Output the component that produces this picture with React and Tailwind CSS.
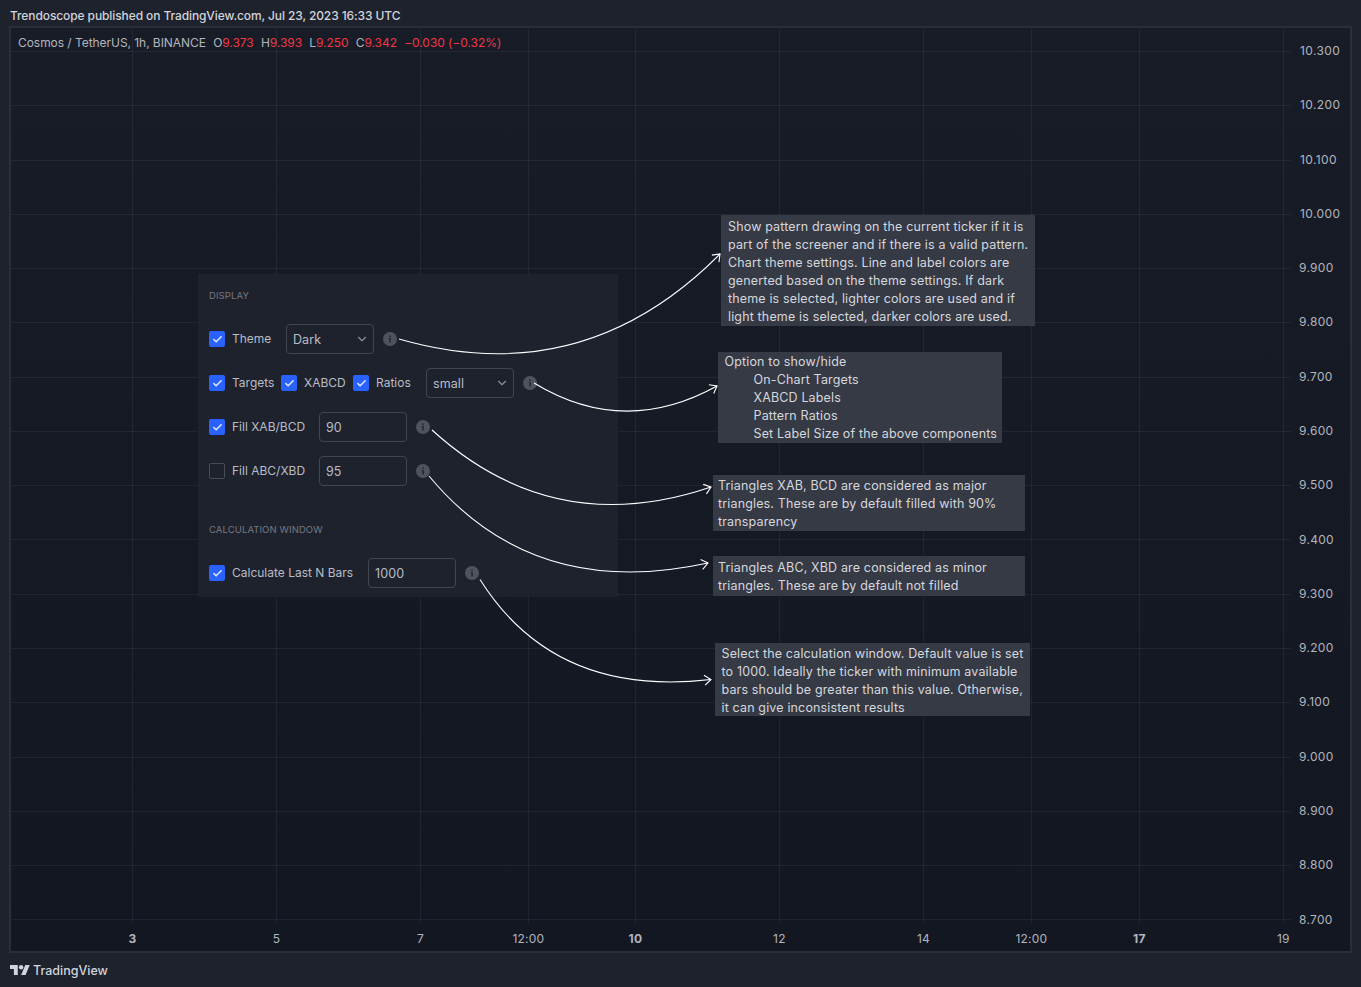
import { Check, ChevronDown } from "lucide-react";

const prices = Array.from({ length: 17 }, (_, i) => (10.3 - i * 0.1).toFixed(3));

const times = [
  { x: 132, label: "3", bold: true },
  { x: 276, label: "5" },
  { x: 420, label: "7" },
  { x: 528, label: "12:00" },
  { x: 635, label: "10", bold: true },
  { x: 779, label: "12" },
  { x: 923, label: "14" },
  { x: 1031, label: "12:00" },
  { x: 1139, label: "17", bold: true },
  { x: 1283, label: "19" },
];

const arrows = [
  "M399 339Q583 392 720 254",
  "M534 383Q623.6 437.6 717 386",
  "M432 430Q553.5 540.6 711 487",
  "M429 476Q533 601.4 708 563",
  "M480 579.5Q554.5 698 711 679.5",
];

function Chart() {
  return (
    <svg
      className="absolute inset-0"
      width="1339"
      height="923"
      viewBox="11 28 1339 923"
      fill="none"
    >
      <g stroke="#f0f3fa" strokeOpacity="0.06">
        {prices.map((p, i) => {
          const y = Math.round(51 + i * 54.27) + 0.5;
          return <path key={p} d={`M11 ${y}H1291`} />;
        })}
        {times.map((t) => (
          <path key={t.x} d={`M${t.x + 0.5} 28V924`} />
        ))}
      </g>
      {times.map((t) => (
        <text
          key={t.x}
          x={t.x + 0.4}
          y="943"
          textAnchor="middle"
          fill="#b2b5be"
          fontSize="12"
          letterSpacing="0.2"
          fontWeight={t.bold ? 700 : 400}
        >
          {t.label}
        </text>
      ))}
    </svg>
  );
}

function Arrows() {
  return (
    <svg
      className="absolute inset-0"
      width="1339"
      height="923"
      viewBox="11 28 1339 923"
      fill="none"
      stroke="#ffffff"
    >
      <defs>
        <marker
          id="head"
          orient="auto"
          markerUnits="userSpaceOnUse"
          markerWidth="20"
          markerHeight="20"
          viewBox="-10 -10 20 20"
        >
          <path d="M-6.5 -5L0 0L-6.5 5" strokeWidth="1.1" />
        </marker>
      </defs>
      {arrows.map((d) => (
        <path key={d} d={d} strokeWidth="1.1" markerEnd="url(#head)" />
      ))}
    </svg>
  );
}

function Checkbox({ checked = true }) {
  if (!checked) {
    return <span className="w-4 h-4 shrink-0 rounded-[2px] border border-[#484b55]" />;
  }
  return (
    <span className="w-4 h-4 shrink-0 rounded-[2px] bg-[#2962ff] flex items-center justify-center">
      <Check className="w-[11px] h-[11px] text-[#dbe3fb]" strokeWidth={3.5} />
    </span>
  );
}

function Label({ className, children }) {
  return (
    <span className={`ml-[7px] shrink-0 whitespace-nowrap ${className}`}>
      {children}
    </span>
  );
}

function Field({ children, select }) {
  return (
    <span className="w-[88px] h-[30px] shrink-0 rounded-[4px] border border-[#434651] pl-[6px] pr-[4px] flex items-center justify-between text-[12.5px] tracking-[0.1px]">
      <span className="pt-[2px]">{children}</span>
      {select && <ChevronDown className="w-[14px] h-[14px] text-[#8c8f99]" />}
    </span>
  );
}

function Info() {
  return (
    <svg className="ml-[9px] shrink-0" width="14" height="14" viewBox="0 0 14 14">
      <circle cx="7" cy="7" r="7" fill="#50535e" />
      <path d="M6.2 3.5h1.7v1.6H6.2zM5.6 6h2.3v4.4H6.3V7h-.7z" fill="#262a35" />
    </svg>
  );
}

function Settings() {
  return (
    <div className="absolute left-[187px] top-[246px] w-[420px] h-[323px] bg-[#1e222d] pl-[11px] text-[12px] text-[#b9bcc6]">
      <div className="h-[43px] pt-px flex items-center text-[9.5px] tracking-[0.1px] text-[#757984]">
        DISPLAY
      </div>
      <div className="h-11 flex items-center">
        <Checkbox />
        <Label className="w-[54px]">Theme</Label>
        <Field select>Dark</Field>
        <Info />
      </div>
      <div className="h-11 flex items-center">
        <Checkbox />
        <Label className="w-[49px]">Targets</Label>
        <Checkbox />
        <Label className="w-[49px]">XABCD</Label>
        <Checkbox />
        <Label className="w-[50px]">Ratios</Label>
        <Field select>small</Field>
        <Info />
      </div>
      <div className="h-11 flex items-center">
        <Checkbox />
        <Label className="w-[87px]">Fill XAB/BCD</Label>
        <Field>90</Field>
        <Info />
      </div>
      <div className="h-11 flex items-center">
        <Checkbox checked={false} />
        <Label className="w-[87px]">Fill ABC/XBD</Label>
        <Field>95</Field>
        <Info />
      </div>
      <div className="mt-[15px] h-[43px] pt-px flex items-center text-[9.5px] tracking-[0.1px] text-[#757984]">
        CALCULATION WINDOW
      </div>
      <div className="h-11 flex items-center">
        <Checkbox />
        <Label className="w-[136px]">Calculate Last N Bars</Label>
        <Field>1000</Field>
        <Info />
      </div>
    </div>
  );
}

function Note({ className, lines }) {
  return (
    <div
      className={`absolute bg-[#363a45] text-[12.5px] leading-[18px] tracking-[0.15px] text-[#d5d7de] whitespace-nowrap ${className}`}
    >
      {lines.map((line) => (
        <div key={line}>{line}</div>
      ))}
    </div>
  );
}

function Ohlc({ name, value }) {
  return (
    <span>
      {name}
      <span className="text-[#f23645]">{value}</span>
    </span>
  );
}

export default function App() {
  return (
    <div className="w-[1361px] h-[987px] overflow-hidden bg-[#1e222d] font-['Inter',sans-serif] flex flex-col">
      <header className="h-[26px] shrink-0 pl-[10px] pt-[7px] text-[12px] leading-[18px] tracking-[-0.1px] font-medium text-[#d1d4dc] whitespace-nowrap">
        Trendoscope published on TradingView.com, Jul 23, 2023 16:33 UTC
      </header>

      <main className="relative ml-[9px] w-[1343px] h-[927px] shrink-0 border-2 border-[#2a2e39] bg-linear-to-b from-[#181c27] to-[#131722] text-[12px] text-[#b2b5be]">
        <Chart />

        {/* Symbol legend and price scale */}
        <div className="flex justify-between">
          <div className="pl-[7px] pt-[6px] h-6 flex gap-[7.2px] leading-[18px] tracking-[-0.05px] whitespace-nowrap">
            <span>Cosmos / TetherUS, 1h, BINANCE</span>
            <Ohlc name="O" value="9.373" />
            <Ohlc name="H" value="9.393" />
            <Ohlc name="L" value="9.250" />
            <Ohlc name="C" value="9.342" />
            <span className="text-[#f23645]">−0.030 (−0.32%)</span>
          </div>
          <div className="w-[51px] h-[886.5px] mt-[14px] flex flex-col justify-between leading-[18px] tracking-[0.3px]">
            {prices.map((p) => (
              <span key={p} className={p.length > 5 ? "pl-px tracking-[0.4px]" : ""}>
                {p}
              </span>
            ))}
          </div>
        </div>

        <Settings />

        <Note
          className="left-[710px] top-[187px] w-[314px] h-[111px] pl-[7px] pt-[3px]"
          lines={[
            "Show pattern drawing on the current ticker if it is",
            "part of the screener and if there is a valid pattern.",
            "Chart theme settings. Line and label colors are",
            "generted based on the theme settings. If dark",
            "theme is selected, lighter colors are used and if",
            "light theme is selected, darker colors are used.",
          ]}
        />
        <div className="absolute left-[707px] top-[324px] w-[284px] h-[91px] pl-[6.5px] pt-px bg-[#363a45] text-[12.5px] leading-[18px] tracking-[0.15px] text-[#d5d7de] whitespace-nowrap">
          Option to show/hide
          <ul className="pl-[29px]">
            <li>On-Chart Targets</li>
            <li>XABCD Labels</li>
            <li>Pattern Ratios</li>
            <li>Set Label Size of the above components</li>
          </ul>
        </div>
        <Note
          className="left-[702px] top-[447px] w-[312px] h-[56px] pl-[5px] pt-[2px]"
          lines={[
            "Triangles XAB, BCD are considered as major",
            "triangles. These are by default filled with 90%",
            "transparency",
          ]}
        />
        <Note
          className="left-[702px] top-[528px] w-[312px] h-[40px] pl-[5px] pt-[3px]"
          lines={[
            "Triangles ABC, XBD are considered as minor",
            "triangles. These are by default not filled",
          ]}
        />
        <Note
          className="left-[704px] top-[615px] w-[315px] h-[73px] pl-[6.5px] pt-[2px]"
          lines={[
            "Select the calculation window. Default value is set",
            "to 1000. Ideally the ticker with minimum available",
            "bars should be greater than this value. Otherwise,",
            "it can give inconsistent results",
          ]}
        />

        <Arrows />
      </main>

      <footer className="flex-1 flex items-center gap-[3px] pl-[10px] text-[12.5px] font-medium text-[#d1d4dc]">
        <svg className="mb-px" width="20" height="10" viewBox="0 4 36 18" fill="currentColor">
          <path d="M14 22H7V11H0V4h14v18zM28 22h-8l7.5-18h8L28 22z" />
          <circle cx="20" cy="8" r="4" />
        </svg>
        <span className="pt-[2px]">TradingView</span>
      </footer>
    </div>
  );
}
